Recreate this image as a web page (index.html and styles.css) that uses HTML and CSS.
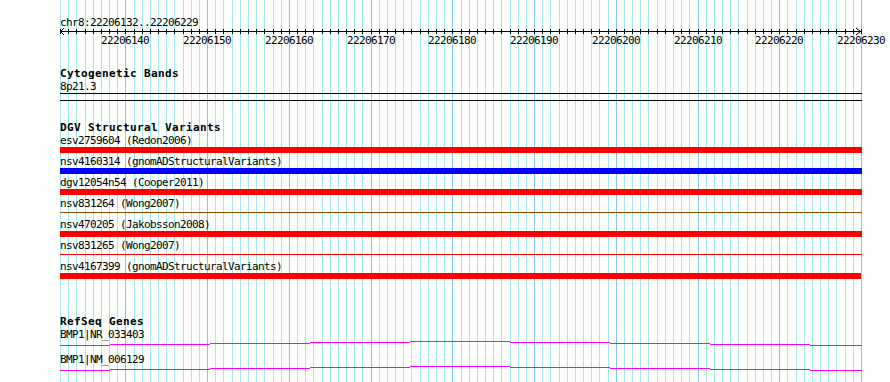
FILE: index.html
```html
<!DOCTYPE html>
<html lang="en">
<head>
    <meta charset="UTF-8">
    <title>chr8:22206132..22206229</title>
    <link rel="stylesheet" href="styles.css">
</head>
<body>
<div id="browser">
    <svg id="grid" width="890" height="382"></svg>

    <div id="tracks">
        <div class="pos">chr8:22206132..22206229</div>
        <svg id="ruler" width="830" height="19"></svg>

        <div class="track cyto">
            <h2>Cytogenetic Bands</h2>
            <div class="label">8p21.3</div>
            <div class="band"></div>
        </div>

        <div class="track dgv">
            <h2>DGV Structural Variants</h2>
            <div class="feat">
                <div class="label">esv2759604 (Redon2006)</div>
                <div class="bar loss"></div>
            </div>
            <div class="feat">
                <div class="label">nsv4160314 (gnomADStructuralVariants)</div>
                <div class="bar gain"></div>
            </div>
            <div class="feat">
                <div class="label">dgv12054n54 (Cooper2011)</div>
                <div class="bar loss"></div>
            </div>
            <div class="feat">
                <div class="label">nsv831264 (Wong2007)</div>
                <div class="bar thin inv"></div>
            </div>
            <div class="feat">
                <div class="label">nsv470205 (Jakobsson2008)</div>
                <div class="bar loss"></div>
            </div>
            <div class="feat">
                <div class="label">nsv831265 (Wong2007)</div>
                <div class="bar thin loss"></div>
            </div>
            <div class="feat">
                <div class="label">nsv4167399 (gnomADStructuralVariants)</div>
                <div class="bar loss short"></div>
            </div>
        </div>

        <div class="track refseq">
            <h2>RefSeq Genes</h2>
            <div class="gene">
                <div class="label">BMP1|NR_033403</div>
                <svg class="intron" width="802" height="5"></svg>
            </div>
            <div class="gene">
                <div class="label">BMP1|NM_006129</div>
                <svg class="intron" width="802" height="5"></svg>
            </div>
        </div>
    </div>
</div>

<script>
    window.onload=function () {
        var start=22206132, end=22206230;
        var left=60, span=801;
        var step=span/(end-start);

        var grid='', ruler='';
        for(var p=start;p<=end;p++){
            var x=Math.round((p-start)*step);
            var major=p%10===0;
            grid+='<rect x="'+(x+left)+'" y="0" width="1" height="382" class="'+(major?'major':'minor')+'"/>';
            ruler+='<rect x="'+x+'" y="0" width="1" height="5"/>';
            if(major){
                //标签居中在刻度上
                ruler+='<text x="'+(x-24)+'" y="15" class="tick">'+p+'</text>';
            }
        }
        document.getElementById('grid').innerHTML=grid;

        //轴线和两端箭头
        ruler+='<rect x="0" y="2" width="802" height="1"/>';
        ruler+='<polyline points="4,-1 0.5,2.5 4,6" class="arrow"/>';
        ruler+='<polyline points="796,-1 800.5,2.5 796,6" class="arrow"/>';
        document.getElementById('ruler').innerHTML=ruler;

        //内含子折线: 每100px升降1px
        var segs=[[0,50,4],[50,150,3],[150,250,2],[250,350,1],[350,450,0],
                  [450,550,1],[550,650,2],[650,750,3],[750,802,4]];
        var hat='';
        for(var i=0;i<segs.length;i++){
            hat+='<rect x="'+segs[i][0]+'" y="'+segs[i][2]+'" width="'+(segs[i][1]-segs[i][0])+'" height="1"/>';
        }
        var introns=document.querySelectorAll('.intron');
        for(var j=0;j<introns.length;j++){
            introns[j].innerHTML=hat;
        }
    }
</script>
</body>
</html>
```

FILE: styles.css
```css
*{
    margin: 0;
    padding: 0;
}
body{
    background-color: #fcfefc;
    color: #000;
    font-family: "DejaVu Sans Mono", "Liberation Mono", monospace;
    font-size: 11px;
    letter-spacing: -0.62px;
    line-height: 13px;
}
#browser{
    width: 890px;
    height: 382px;
    overflow: hidden;

    position: relative;
}
#grid{
    position: absolute;
    left: 0;
    top: 0;
}
#grid .minor{
    fill: #a6e6ee;
}
#grid .major{
    fill: #84c6e8;
}
#tracks{
    position: relative;
    padding: 16px 0 0 60px;
}
.pos{
    height: 13px;
    white-space: nowrap;
}
#ruler{
    display: block;
    overflow: visible;
}
#ruler rect{
    fill: #000;
}
#ruler .arrow{
    fill: none;
    stroke: #000;
    stroke-width: 1;
}
.tick{
    fill: #000;
    font-family: "DejaVu Sans Mono", "Liberation Mono", monospace;
    font-size: 11px;
}
h2{
    height: 13px;
    font-size: 11px;
    font-weight: bold;
    letter-spacing: 0.38px;
    white-space: nowrap;
}
.label{
    height: 13px;
    white-space: nowrap;
}
.track{
    display: flow-root;
}
.cyto{
    margin-top: 19px;
}
.band{
    width: 802px;
    height: 6px;
    border-top: 1px solid #000;
    border-bottom: 1px solid #000;
}
.dgv{
    margin-top: 20px;
}
.feat{
    padding-bottom: 2px;
}
.bar{
    width: 802px;
    height: 6px;
}
.bar.thin{
    height: 1px;
    margin: 2px 0 3px;
}
.bar.short{
    width: 801px;
}
.loss{
    background-color: #ff0000;
}
.gain{
    background-color: #0000ff;
}
.inv{
    background-color: #964b00;
}
.refseq{
    margin-top: 34px;
}
.gene{
    padding-bottom: 7px;
}
.intron{
    display: block;
}
.intron rect{
    fill: #ff00ff;
}
```
